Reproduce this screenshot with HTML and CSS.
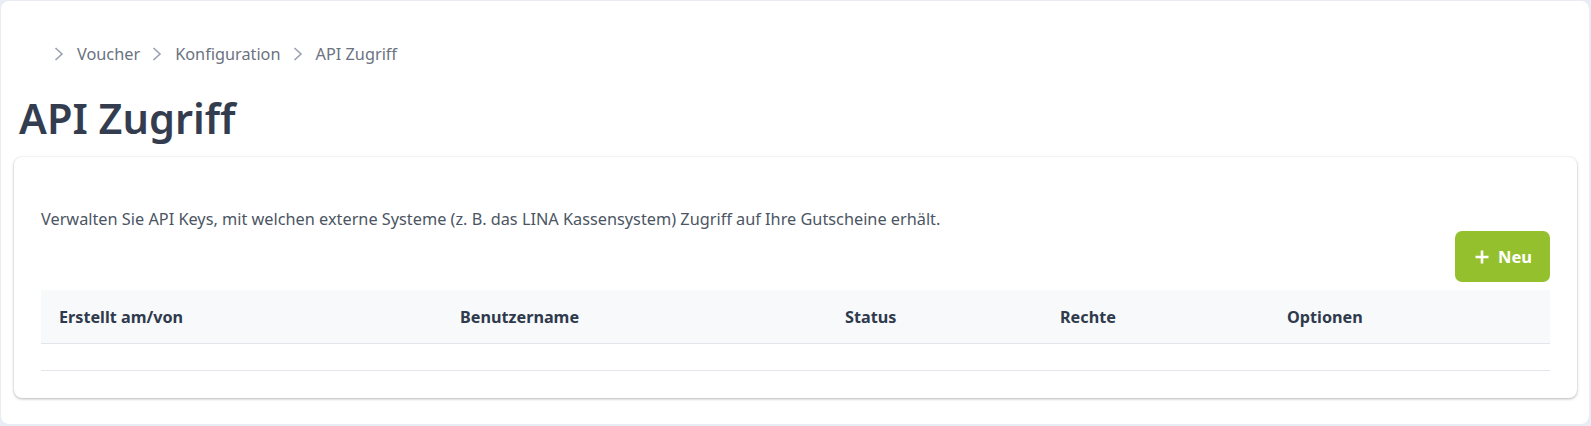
FILE: index.html
```html
<!DOCTYPE html>
<html lang="de">
<head>
  <meta charset="UTF-8" />
  <title>API Zugriff</title>
  <link rel="stylesheet" href="styles.css">
</head>
<body>
  <div class="panel">
    <nav class="breadcrumb">
      <ol>
        <li><svg class="chevron" viewBox="0 0 10 14"><polyline points="1.5,1 8,7 1.5,13" /></svg><a>Voucher</a></li>
        <li><svg class="chevron" viewBox="0 0 10 14"><polyline points="1.5,1 8,7 1.5,13" /></svg><a>Konfiguration</a></li>
        <li><svg class="chevron" viewBox="0 0 10 14"><polyline points="1.5,1 8,7 1.5,13" /></svg><span>API Zugriff</span></li>
      </ol>
    </nav>

    <h1 class="page-title">API Zugriff</h1>

    <div class="card">
      <p class="intro">Verwalten Sie API Keys, mit welchen externe Systeme (z. B. das LINA Kassensystem) Zugriff auf Ihre Gutscheine erhält.</p>

      <div class="actions">
        <button class="btn-new">
          <svg viewBox="0 0 16 16"><path d="M8 1.5v13M1.5 8h13" /></svg>
          Neu
        </button>
      </div>

      <table class="keys-table">
        <colgroup>
          <col class="col-created">
          <col class="col-user">
          <col class="col-status">
          <col class="col-rights">
          <col class="col-options">
        </colgroup>
        <thead>
          <tr>
            <th>Erstellt am/von</th>
            <th>Benutzername</th>
            <th>Status</th>
            <th>Rechte</th>
            <th>Optionen</th>
          </tr>
        </thead>
        <tbody>
          <tr class="empty-row"><td colspan="5"></td></tr>
        </tbody>
      </table>
    </div>
  </div>
</body>
</html>
```

FILE: styles.css
```css
body {
  margin: 0;
  background-color: #e9ecf2;
  font-family: 'Segoe UI', 'Noto Sans', sans-serif;
  color: #374151;
}

.panel {
  margin: 1px 2px 2px 1px;
  height: 423px;
  box-sizing: border-box;
  background-color: #fff;
  border-radius: 8px;
  padding: 38px 12px 0 13px;
}

.breadcrumb ol {
  display: flex;
  align-items: center;
  list-style: none;
  margin: 0 0 0 40px;
  padding: 0;
  gap: 12px;
}

.breadcrumb li {
  display: flex;
  align-items: center;
  gap: 13px;
  font-size: 16.3px;
  line-height: 30px;
  color: #6b7280;
}

.chevron {
  width: 10px;
  height: 14px;
  fill: none;
  stroke: #9aa1b0;
  stroke-width: 1.6;
}

.page-title {
  margin: 21px 0 11px 5px;
  font-size: 41.5px;
  font-weight: 600;
  line-height: 56px;
  color: #333d4f;
}

.card {
  background-color: #fff;
  border-radius: 8px;
  box-shadow: 0 1px 3px rgba(0, 0, 0, 0.28), 0 0 2px rgba(0, 0, 0, 0.06);
  padding: 50px 27px 27px 27px;
}

.intro {
  margin: 0;
  font-size: 16.3px;
  line-height: 24px;
  color: #4b5563;
}

.actions {
  display: flex;
  justify-content: flex-end;
  margin-bottom: 8px;
}

.btn-new {
  display: flex;
  align-items: center;
  gap: 8px;
  height: 51px;
  padding: 0 18px 0 19px;
  border: none;
  border-radius: 7px;
  background-color: #95c02e;
  color: #fff;
  font-family: inherit;
  font-size: 16.5px;
  font-weight: 700;
  cursor: pointer;
}

.btn-new svg {
  width: 16px;
  height: 16px;
  fill: none;
  stroke: #fff;
  stroke-width: 2.6;
}

.keys-table {
  width: 100%;
  table-layout: fixed;
  border-collapse: collapse;
}

.col-created { width: 401px; }
.col-user { width: 385px; }
.col-status { width: 215px; }
.col-rights { width: 227px; }

.keys-table th {
  height: 53px;
  padding: 0 18px;
  text-align: left;
  font-size: 16.2px;
  font-weight: 700;
  color: #2f3a4c;
  background-color: #f8f9fb;
  border-bottom: 1px solid #e3e5ec;
}

.empty-row td {
  height: 26px;
  padding: 0;
  border-bottom: 1px solid #e3e5ec;
}
```
